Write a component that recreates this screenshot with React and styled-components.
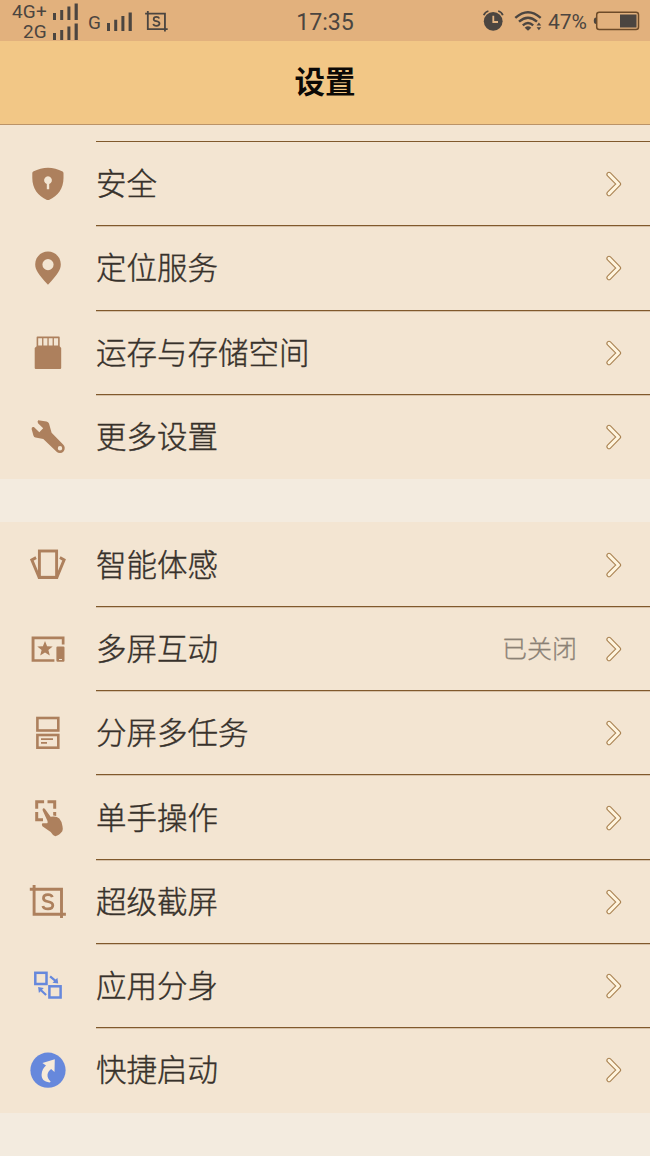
import React from "react";
import styled, { createGlobalStyle } from "styled-components";

const brown = "#ad805d";
const blue = "#6688dc";
const ink = "#4b4540";

const GlobalStyle = createGlobalStyle`
  *, *::after {
    box-sizing: border-box;
  }
  body {
    margin: 0;
    background: #f3ebdf;
    font-family: "Liberation Sans", "Noto Sans CJK SC", sans-serif;
  }
`;

const ShieldIcon = () => (
  <Icon fill={brown}>
    <path
      fillRule="evenodd"
      d="M20 3.7C25 3.7 30 5 34.6 7.5Q35.5 8 35.5 9.2V14C35.5 24.5 30 32 21 35.9Q20 36.3 19 35.9C10 32 4.3 24.5 4.3 14V9.2Q4.3 8 5.2 7.5C10 5 15 3.7 20 3.7ZM18.8 19.9V25.2H21.2V19.9A3.9 3.9 0 1 0 18.8 19.9Z"
    />
  </Icon>
);

const PinIcon = () => (
  <Icon fill={brown}>
    <path
      fillRule="evenodd"
      d="M20 3.6C12.9 3.6 7.2 9.2 7.2 16.2C7.2 22 10.5 26.5 20 36.8C29.5 26.5 32.8 22 32.8 16.2C32.8 9.2 27.1 3.6 20 3.6ZM20 11A5.6 5.6 0 1 1 20 22.2A5.6 5.6 0 1 1 20 11Z"
    />
  </Icon>
);

const StorageIcon = () => (
  <Icon fill={brown}>
    <path
      fillRule="evenodd"
      d="M9.4 3.6H31Q31.7 3.6 31.7 4.4V13.2L33.2 15V34.9Q33.2 36 32.1 36H7.8Q6.7 36 6.7 34.9V15L8.6 13.2V4.4Q8.6 3.6 9.4 3.6ZM10.2 5.3V12.6H14.1V5.3ZM15.4 5.3V12.6H19.4V5.3ZM20.7 5.3V12.6H24.6V5.3ZM25.9 5.3V12.6H30.1V5.3Z"
    />
  </Icon>
);

const WrenchIcon = () => (
  <Icon fill={brown}>
    <path
      fillRule="evenodd"
      d="M10.2 3.3L18.5 4.6Q20.3 4.9 21 6.6L23.6 15.7L35.1 27.5A4.5 4.5 0 0 1 28.6 34.8L15.3 22L7.5 20.6Q6 20.3 5.5 18.7L3.6 11.9Q3.6 9.4 5.9 10.1L11.3 15.3L15.2 11.3L10 6.3Q9.1 4.2 10.2 3.3ZM32 29.1A2.2 2.2 0 1 0 32 33.5A2.2 2.2 0 1 0 32 29.1Z"
    />
  </Icon>
);

const MotionIcon = () => (
  <Icon fill="none" stroke={brown} strokeWidth="2.9">
    <rect x="11.4" y="6" width="17.2" height="26.3" />
    <path d="M8.1 12.6L3.8 14.9L11.2 32.6H28.8L36.1 14.9L31.9 12.6" />
  </Icon>
);

const ScreenIcon = () => (
  <Icon fill={brown}>
    <path d="M3.6 7.6H36.5V15.5H33.8V10.3H6.5V30.2H26.4V32.8H3.6Z" />
    <path d="M17 11.9L19.1 17.2L24.7 17.6L20.4 21.1L21.8 26.6L17 23.6L12.2 26.6L13.6 21.1L9.3 17.6L14.9 17.2Z" />
    <path
      fillRule="evenodd"
      d="M29.5 17.4H35.4Q36.5 17.4 36.5 18.5V31.7Q36.5 32.8 35.4 32.8H29.5Q28.4 32.8 28.4 31.7V18.5Q28.4 17.4 29.5 17.4ZM31 30.1V31.1H34V30.1Z"
    />
  </Icon>
);

const SplitIcon = () => (
  <Icon fill="none" stroke={brown} strokeWidth="2.6">
    <rect x="9.4" y="5" width="20.9" height="12.5" />
    <rect x="9.4" y="22" width="20.9" height="12.7" />
    <path d="M13 26.2H25M13 29.9H19" strokeWidth="1.8" />
  </Icon>
);

const TouchIcon = () => (
  <Icon fill={brown}>
    <path d="M7.2 2.3H16.1V5.3H10.2V10.8H7.2ZM19.5 2.3H28.2V10.8H25.2V5.3H19.5ZM7.2 14.1H10.2V20.3H15V23.3H7.2ZM25.2 14.1H28.2V18L25.2 17.4Z" />
    <path d="M15 10.4Q16.1 9.6 17.2 11.2L22.6 18.8Q28.4 17.6 31.3 20.6Q33.6 23 34.5 28.2Q35.2 31.4 34.3 33.2Q31.5 37.3 27.3 38.2Q24.8 37.5 22.7 34L14.4 28.2Q13.2 25.6 14.8 25.2L19.2 25.3Q20 24.9 19.5 22.9L14.7 12.5Q14.3 11.1 15 10.4Z" />
  </Icon>
);

const CaptureIcon = ({ size = 40, color = brown }) => (
  <Icon $size={size} fill="none" stroke={color} strokeWidth="2.9">
    <path d="M6.1 3.1V32.2H37.9M1.8 7.3H33.5V36" />
    <path
      d="M24.3 15.2Q23.6 12.7 20 12.7Q15.5 12.7 15.5 16.2Q15.5 18.7 19.6 19.5Q24.8 20.4 24.8 23.3Q24.8 26.9 20 26.9Q15.5 26.9 14.9 23.9"
      strokeWidth="2.8"
    />
  </Icon>
);

const CloneIcon = () => (
  <Icon fill="none" stroke={blue} strokeWidth="2.5">
    <rect x="7.3" y="6.8" width="11.2" height="11.2" />
    <rect x="21.4" y="20.3" width="11.2" height="11.2" />
    <path d="M22.1 10.3L27.5 14.9M18.1 29L13 24.3" strokeWidth="2.2" />
    <path
      d="M30.2 17.5L29.4 11.7L24.5 16.7ZM10.1 21.1L10.9 26.9L15.8 21.9Z"
      fill={blue}
      stroke="none"
    />
  </Icon>
);

const LaunchIcon = () => (
  <Icon>
    <circle cx="20" cy="20.2" r="17.6" fill={blue} />
    <path
      d="M14.4 12.9L26.8 9.3L26.5 22L23.1 18.9C19.2 22.1 17.7 26.4 22.6 31.6Q22.6 32.4 21.6 32.4C16 32.2 13.4 28.8 13.6 24.6C13.8 20.4 15.6 18 18 15.6Z"
      fill="#f6ead9"
    />
  </Icon>
);

const Chevron = () => (
  <Arrow viewBox="0 0 16 26">
    <path d="M3 3.4L12.5 13L3 22.6" stroke="#aa8353" strokeWidth="5.2" />
    <path d="M3 3.4L12.5 13L3 22.6" stroke="#fff5df" strokeWidth="3" />
  </Arrow>
);

const Signal = ({ height = 18 }) => (
  <Glyph width={25} height={height} viewBox="0 0 25 18" fill={ink} preserveAspectRatio="none">
    <path d="M0 10H3V17H0ZM7.2 7H10.2V17H7.2ZM14.4 3.5H17.4V17H14.4ZM21.6 0.5H24.8V17H21.6Z" />
  </Glyph>
);

const general = [
  { name: "安全", icon: ShieldIcon },
  { name: "定位服务", icon: PinIcon },
  { name: "运存与存储空间", icon: StorageIcon },
  { name: "更多设置", icon: WrenchIcon },
];

const features = [
  { name: "智能体感", icon: MotionIcon },
  { name: "多屏互动", icon: ScreenIcon, status: "已关闭" },
  { name: "分屏多任务", icon: SplitIcon },
  { name: "单手操作", icon: TouchIcon },
  { name: "超级截屏", icon: CaptureIcon },
  { name: "应用分身", icon: CloneIcon },
  { name: "快捷启动", icon: LaunchIcon },
];

const SettingGroup = ({ items }) => (
  <Group>
    {items.map(({ name, icon: RowIcon, status }) => (
      <Row key={name}>
        <IconCell>
          <RowIcon />
        </IconCell>
        <RowBody>
          <Label>{name}</Label>
          {status && <Status>{status}</Status>}
          <Chevron />
        </RowBody>
      </Row>
    ))}
  </Group>
);

const App = () => {
  return (
    <Page>
      <GlobalStyle />
      <StatusBar>
        <StatusLeft>
          <Networks>
            <Network>
              <span>4G+</span>
              <Signal />
            </Network>
            <Network>
              <span>2G</span>
              <Signal />
            </Network>
          </Networks>
          <SmallNetwork>
            <span>G</span>
            <Signal height={20} />
          </SmallNetwork>
          <CaptureIcon size={25} color={ink} />
        </StatusLeft>
        <Clock>17:35</Clock>
        <StatusRight>
          <Glyph width="22" height="22" viewBox="0 0 22 22" fill={ink}>
            <circle cx="10.2" cy="11.3" r="9.4" />
            <path d="M0.8 5.3Q2 1.9 5.4 1M19.8 5.3Q18.6 1.9 15.2 1" fill="none" stroke={ink} strokeWidth="1.8" />
            <path d="M10.3 5.7V12H15" fill="none" stroke="#e4b582" strokeWidth="1.8" />
          </Glyph>
          <Wifi width="29" height="22" viewBox="0 0 29 22" fill="none" stroke={ink} strokeWidth="2.4">
            <path d="M1.3 7.8Q14 -3.5 26.7 7.8M5 11.7Q14 3.7 23 11.7M8.8 15.3Q14 10.8 19.2 15.3" />
            <path d="M10.7 17.7Q14 14.8 17.3 17.7L14 20.8Z" fill={ink} stroke="none" />
            <path d="M22.6 15.4L24.9 12.6L27.2 15.4ZM22.6 17.3H27.2L24.9 20.2Z" fill={ink} stroke="none" />
          </Wifi>
          <Percent>47%</Percent>
          <Glyph width="47" height="20" viewBox="0 0 47 20" fill="none">
            <path d="M3.2 6.5V13Q0.8 13 0.8 9.8T3.2 6.5Z" fill={ink} />
            <rect x="3.7" y="1.2" width="41.8" height="17.4" rx="2.5" stroke="#6d4b29" strokeWidth="1.5" />
            <rect x="27" y="3.5" width="16.5" height="13" fill={ink} />
          </Glyph>
        </StatusRight>
      </StatusBar>
      <Header>设置</Header>
      <Spacer />
      <SettingGroup items={general} />
      <Gap />
      <SettingGroup items={features} />
    </Page>
  );
};

const Page = styled.div`
  width: 650px;
  height: 1156px;
  overflow: hidden;
  background: #f3ebdf;
`;

const StatusBar = styled.div`
  display: grid;
  grid-template-columns: 1fr auto 1fr;
  align-items: center;
  height: 41px;
  padding: 0 10px;
  background: #e2b17d;
  color: ${ink};
  font-family: Roboto, "Liberation Sans", sans-serif;
`;

const StatusLeft = styled.div`
  display: flex;
  align-items: center;
`;

const Networks = styled.div`
  display: flex;
  flex-direction: column;
  width: 68px;
  padding-top: 2px;
`;

const Network = styled.div`
  display: flex;
  align-items: center;
  justify-content: flex-end;
  gap: 6px;
  height: 20px;
  font-size: 19px;
  line-height: 20px;
  letter-spacing: 0.2px;
`;

const SmallNetwork = styled.div`
  display: flex;
  align-items: center;
  gap: 6px;
  margin: 2px 12px 0 10px;
  font-size: 19px;
`;

const Clock = styled.div`
  padding-top: 1px;
  font-size: 23.2px;
  line-height: 26px;
`;

const StatusRight = styled.div`
  display: flex;
  align-items: center;
  justify-content: flex-end;
`;

const Glyph = styled.svg`
  flex: none;
  display: block;
`;

const Wifi = styled(Glyph)`
  margin: 0 5px 0 9px;
`;

const Percent = styled.span`
  padding-top: 2px;
  margin-right: 6px;
  font-size: 21px;
  line-height: 24px;
`;

const Header = styled.h1`
  display: flex;
  align-items: center;
  justify-content: center;
  height: 84px;
  margin: 0;
  padding-bottom: 5px;
  border-bottom: 1px solid #bb9367;
  background: #f2c786;
  color: #0c0906;
  font-size: 30.5px;
  font-weight: 700;
`;

const Spacer = styled.div`
  height: 17px;
  padding-left: 96px;
  background: #f3e5d2;

  &::after {
    content: "";
    display: block;
    height: 100%;
    border-bottom: 1px solid #80592c;
  }
`;

const Gap = styled.div`
  height: 43.3px;
`;

const Group = styled.div`
  background: #f3e5d2;
`;

const RowBody = styled.div`
  flex: 1;
  display: flex;
  align-items: center;
  height: 100%;
  padding: 1px 28px 0 0;
  border-bottom: 1px solid #80592c;
  box-shadow: 0 1px 0 rgba(128, 89, 44, 0.25);
`;

const Row = styled.div`
  display: flex;
  height: 84.3px;

  &:last-child ${RowBody} {
    border-bottom-color: transparent;
    box-shadow: none;
  }
`;

const IconCell = styled.div`
  display: flex;
  align-items: center;
  width: 96px;
  padding-left: 28px;
`;

const Icon = styled.svg.attrs({ viewBox: "0 0 40 40" })`
  flex: none;
  display: block;
  width: ${({ $size }) => $size || 40}px;
  height: ${({ $size }) => $size || 40}px;
`;

const Label = styled.span`
  flex: 1;
  color: #37312b;
  font-size: 30.5px;
  font-weight: 300;
  line-height: 40px;
  -webkit-text-stroke: 0.4px #37312b;
`;

const Status = styled.span`
  margin-right: 29px;
  color: #8b8175;
  font-size: 25px;
  font-weight: 300;
  line-height: 34px;
  -webkit-text-stroke: 0.3px #8b8175;
`;

const Arrow = styled.svg`
  flex: none;
  width: 16px;
  height: 26px;
  fill: none;
  stroke-linecap: round;
  stroke-linejoin: round;
`;

export default App;
